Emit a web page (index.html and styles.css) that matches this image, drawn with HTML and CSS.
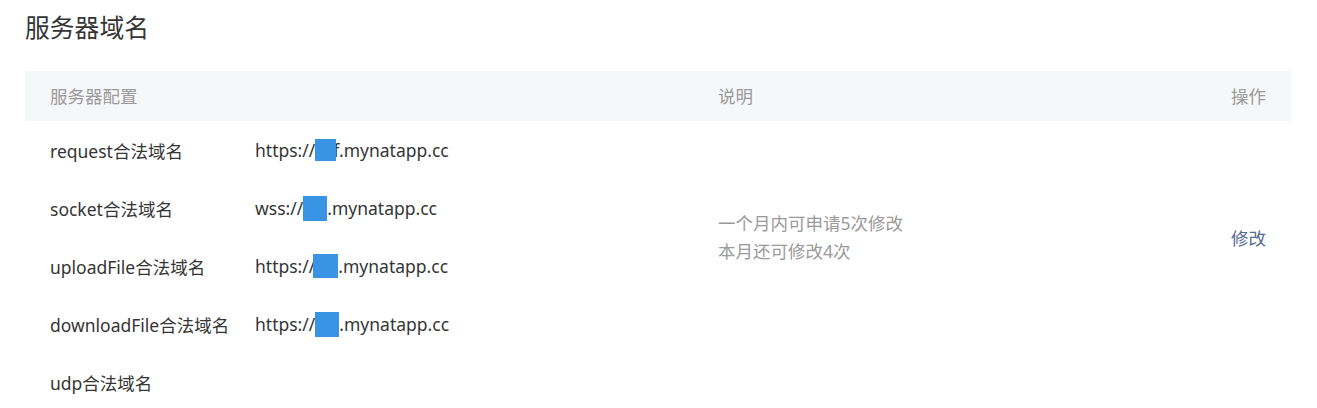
FILE: index.html
```html
<!DOCTYPE html>
<html lang="zh-CN">
<head>
<meta charset="utf-8">
<title>服务器域名</title>
<link rel="stylesheet" href="styles.css">
</head>
<body>
<div class="page">
  <h2 class="title">服务器域名</h2>
  <div class="table">
    <div class="thead">
      <div class="th th-config">服务器配置</div>
      <div class="th th-desc">说明</div>
      <div class="th th-op">操作</div>
    </div>
    <div class="tbody">
      <div class="cell label r1">request合法域名</div>
      <div class="cell value r1">https://<span class="mask m1"></span>f.mynatapp.cc</div>
      <div class="cell label r2">socket合法域名</div>
      <div class="cell value r2">wss://<span class="mask m2"></span>.mynatapp.cc</div>
      <div class="cell label r3">uploadFile合法域名</div>
      <div class="cell value r3">https://<span class="mask m3"></span>.mynatapp.cc</div>
      <div class="cell label r4">downloadFile合法域名</div>
      <div class="cell value r4">https://<span class="mask m4"></span>.mynatapp.cc</div>
      <div class="cell desc">
        <p>一个月内可申请5次修改</p>
        <p>本月还可修改4次</p>
      </div>
      <div class="cell op"><a class="link" href="#">修改</a></div>
      <div class="cell label r5">udp合法域名</div>
    </div>
  </div>
</div>
</body>
</html>
```

FILE: styles.css
```css
* { box-sizing: border-box; }
html, body { margin: 0; padding: 0; background: #fff; }
body {
  font-family: "Noto Sans", "Noto Sans CJK SC", sans-serif;
  color: #353535;
  font-size: 17.5px;
}
.page { padding: 0 26px 0 25px; }
.title {
  margin: 0 0 17px 0;
  font-size: 24.8px;
  font-weight: normal;
  line-height: 54px;
  height: 54px;
  color: #353535;
}
.table { width: 1266px; }
.thead {
  display: grid;
  grid-template-columns: 693px 1fr 120px;
  height: 50px;
  background: #f6f7f9;
  color: #9a9a9a;
  line-height: 50px;
}
.th-config { padding-left: 25px; }
.th-op { text-align: right; padding-right: 25px; }
.tbody {
  display: grid;
  grid-template-columns: 230px 463px 1fr 120px;
  grid-template-rows: repeat(5, 58px);
}
.cell { display: flex; align-items: center; }
.label { grid-column: 1; padding-left: 25px; }
.value { grid-column: 2; white-space: nowrap; }
.r1 { grid-row: 1; }
.r2 { grid-row: 2; }
.r3 { grid-row: 3; }
.r4 { grid-row: 4; }
.r5 { grid-row: 5; }
.desc {
  grid-column: 3;
  grid-row: 1 / span 4;
  flex-direction: column;
  align-items: flex-start;
  justify-content: center;
  color: #9a9a9a;
  line-height: 28px;
}
.desc p { margin: 0; }
.op {
  grid-column: 4;
  grid-row: 1 / span 4;
  justify-content: flex-end;
  padding-right: 25px;
}
.link { color: #576b95; text-decoration: none; }
.mask {
  display: inline-block;
  background: #3a94e6;
  height: 24px;
  width: 24px;
  position: relative;
  z-index: 1;
}
.m1 { width: 21px; height: 22px; margin-right: -3px; }
.m2 { width: 24px; height: 25px; }
.m3 { width: 25px; height: 24px; margin-left: -2px; }
.m4 { width: 24px; height: 25px; }
```
